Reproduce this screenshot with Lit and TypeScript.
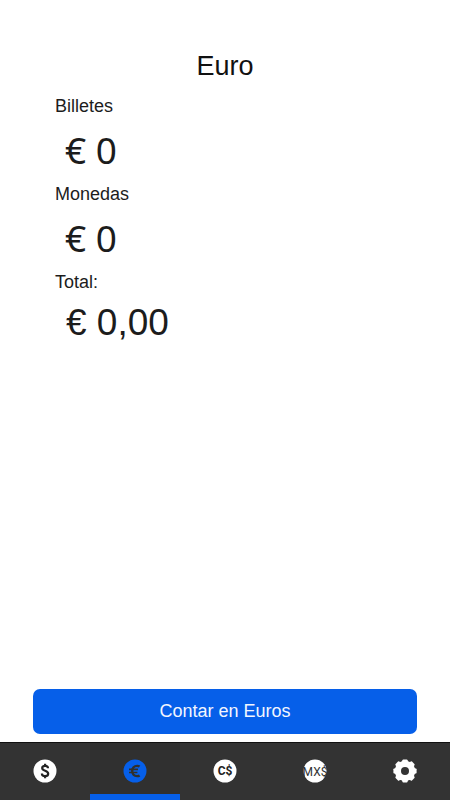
import { LitElement, html, css, svg } from "lit";
import { customElement, state } from "lit/decorators.js";
import { classMap } from "lit/directives/class-map.js";

type Tab = { id: string; label: string };

const TABS: Tab[] = [
  { id: "usd", label: "Dólar" },
  { id: "eur", label: "Euro" },
  { id: "nio", label: "Córdoba" },
  { id: "mxn", label: "Peso mexicano" },
  { id: "settings", label: "Ajustes" },
];

const TOOTH_ANGLES = [0, 45, 90, 135, 180, 225, 270, 315];

@customElement("tab-icon")
class TabIcon extends LitElement {
  static properties = { kind: { type: String } };
  declare kind: string;

  static styles = css`
    :host {
      display: block;
      width: 24px;
      height: 24px;
    }
    svg {
      display: block;
    }
    .disc {
      fill: #fff;
    }
    .disc.blue {
      fill: #065fe9;
    }
    .hole {
      fill: #333;
    }
    .mark {
      fill: none;
      stroke: #222;
      stroke-width: 2.2;
    }
    .mark.dark {
      stroke: #30302c;
      stroke-width: 2.4;
    }
    .mark.bar {
      stroke-width: 1.6;
    }
    text {
      fill: #222;
      text-anchor: middle;
    }
    .cordoba {
      font: 700 12px Roboto, sans-serif;
    }
    .peso {
      font: 400 12px Roboto, sans-serif;
      fill: #333;
    }
  `;

  private glyph() {
    switch (this.kind) {
      case "usd":
        return svg`
          <circle class="disc" cx="12" cy="12" r="11.5" />
          <path class="mark" d="M15 9.2C15 7.5 13.8 6.8 12.2 6.8 10.3 6.8 9.2 7.6 9.2 9 9.2 12.4 15.2 11.2 15.2 14.7 15.2 16.3 13.9 17.1 12 17.1 10.2 17.1 8.9 16.2 8.9 14.4M12.1 4.8v2M12.1 17v2.2" />`;
      case "eur":
        return svg`
          <circle class="disc blue" cx="12" cy="12" r="11.5" />
          <path class="mark dark" d="M16.6 7.6C15.9 7.1 15 6.9 14.1 6.9 11.2 6.9 9.2 9 9.2 12 9.2 15 11.1 17.1 14.1 17.1 15 17.1 15.9 16.9 16.6 16.4" />
          <path class="mark dark bar" d="M6 10.4h9M6 13.5h8.4" />`;
      case "nio":
        return svg`<circle class="disc" cx="12" cy="12" r="11.5" /><text class="cordoba" x="12" y="16">C$</text>`;
      case "mxn":
        return svg`<circle class="disc" cx="12" cy="12" r="11.5" /><text class="peso" x="12" y="17">MX$</text>`;
      default:
        return svg`
          <circle class="disc" cx="12" cy="12" r="10.2" />
          ${TOOTH_ANGLES.map(
            (a) => svg`<path class="disc" transform="rotate(${a} 12 12)" d="M8.6 4.5 9.4 1.2Q9.6.4 10.3.4h3.4q.7 0 .9.8l.8 3.3z" />`
          )}
          <circle class="hole" cx="12" cy="12" r="4" />`;
    }
  }

  render() {
    return html`<svg width="24" height="24" viewBox="0 0 24 24" aria-hidden="true">${this.glyph()}</svg>`;
  }
}

@customElement("app-root")
class AppRoot extends LitElement {
  @state() private active = "eur";

  static styles = css`
    :host {
      display: flex;
      flex-direction: column;
      min-height: 100vh;
      background: #fff;
      color: #1c1c1c;
      font-family: "Liberation Sans", Arial, sans-serif;
    }
    main {
      flex: 1;
      display: flex;
      flex-direction: column;
      padding: 49px 33px 8px;
    }
    h1 {
      margin: 0 0 11px;
      font-size: 27px;
      font-weight: 400;
      line-height: 34px;
      text-align: center;
      color: #111;
    }
    dl {
      margin: 0;
      padding: 0 22px;
    }
    dt {
      font-size: 18px;
      line-height: 24px;
    }
    dd {
      margin: 0;
      padding-left: 11px;
      font-size: 37px;
      line-height: 58px;
    }
    .count {
      padding-left: 10px;
      font-family: "Noto Sans", sans-serif;
      line-height: 64px;
    }
    .action {
      margin-top: auto;
      height: 45px;
      padding: 0;
      border: 0;
      border-radius: 7px;
      background: #065fe9;
      color: #f2f6ff;
      font: 400 18px "Liberation Sans", Arial, sans-serif;
      cursor: pointer;
    }
    nav {
      display: grid;
      grid-template-columns: repeat(5, 1fr);
      height: 57px;
      border-top: 1px solid #111;
      background: #333;
    }
    .tab {
      display: flex;
      align-items: center;
      justify-content: center;
      padding: 4px 0 0;
      border: 0;
      border-bottom: 6px solid transparent;
      background: none;
      cursor: pointer;
    }
    .tab.active {
      border-bottom-color: #065fe9;
      background-color: #303030;
    }
  `;

  render() {
    return html`
      <main>
        <h1>Euro</h1>
        <dl>
          <dt>Billetes</dt>
          <dd class="count">€ 0</dd>
          <dt>Monedas</dt>
          <dd class="count">€ 0</dd>
          <dt>Total:</dt>
          <dd>€ 0,00</dd>
        </dl>
        <button class="action" type="button">Contar en Euros</button>
      </main>
      <nav>
        ${TABS.map(
          (t) => html`<button
            type="button"
            class=${classMap({ tab: true, active: t.id === this.active })}
            aria-label=${t.label}
            @click=${() => (this.active = t.id)}
          >
            <tab-icon kind=${t.id}></tab-icon>
          </button>`
        )}
      </nav>
    `;
  }
}
